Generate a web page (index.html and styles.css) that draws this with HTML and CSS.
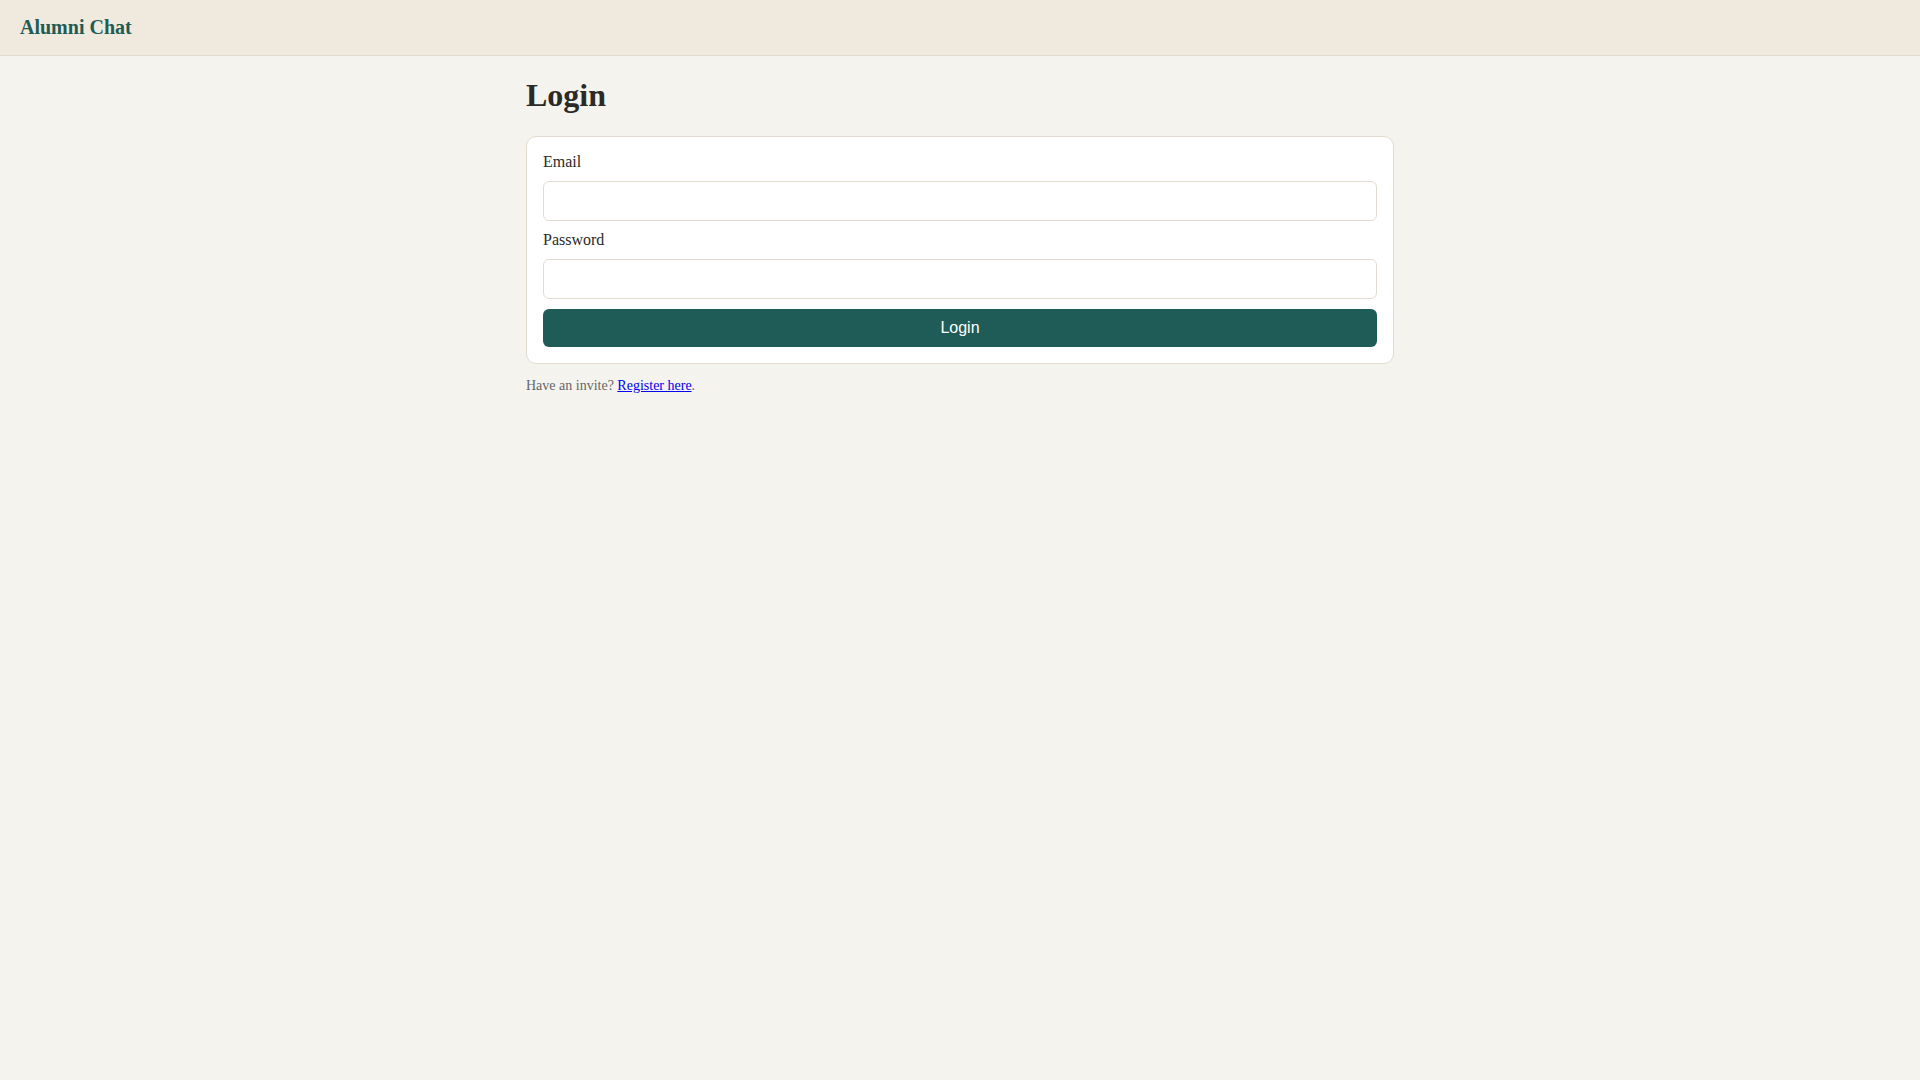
FILE: index.html
```html
<!DOCTYPE html>
<html lang="en">
<head>
<meta charset="utf-8">
<title>Alumni Chat - Login</title>
<link rel="stylesheet" href="styles.css">
</head>
<body>
<header class="topbar">
  <a class="brand" href="#">Alumni Chat</a>
</header>
<main class="container">
  <h1 class="title">Login</h1>
  <form class="card">
    <label class="label" for="email">Email</label>
    <input class="input" id="email" type="email">
    <label class="label" for="password">Password</label>
    <input class="input" id="password" type="password">
    <button class="btn" type="button">Login</button>
  </form>
  <p class="note">Have an invite? <a class="link" href="#">Register here</a>.</p>
</main>
</body>
</html>
```
FILE: styles.css
```css
html, body {
  margin: 0;
  padding: 0;
}
body {
  background: #f5f3ee;
  color: #2b2a27;
  font-family: "Liberation Serif", "Times New Roman", serif;
  font-size: 16px;
}
.topbar {
  background: #f0e9de;
  border-bottom: 1px solid #e2dcd0;
  padding: 16px 20px;
}
.brand {
  color: #1f5c55;
  font-weight: bold;
  font-size: 20px;
  text-decoration: none;
  line-height: 23px;
  display: inline-block;
}
.container {
  max-width: 868px;
  margin: 0 auto;
}
.title {
  font-size: 32px;
  font-weight: bold;
  margin: 21px 0 22px;
  color: #2b2a27;
  line-height: 37px;
}
.card {
  background: #ffffff;
  border: 1px solid #e2dcd0;
  border-radius: 10px;
  padding: 16px;
  display: grid;
  gap: 10px;
}
.label {
  display: block;
  line-height: 18px;
  color: #2b2a27;
}
.input {
  box-sizing: border-box;
  width: 100%;
  height: 40px;
  border: 1px solid #e2dcd0;
  border-radius: 6px;
  padding: 8px 12px;
  font-size: 16px;
  background: #ffffff;
  margin: 0;
}
.btn {
  box-sizing: border-box;
  height: 38px;
  width: 100%;
  border: none;
  border-radius: 6px;
  background: #1f5c58;
  color: #ffffff;
  font-family: "Liberation Sans", Arial, sans-serif;
  font-size: 16px;
  margin: 0;
}
.note {
  font-size: 14px;
  color: #666666;
  margin: 14px 0;
}
.link {
  color: #0000ee;
}
```
